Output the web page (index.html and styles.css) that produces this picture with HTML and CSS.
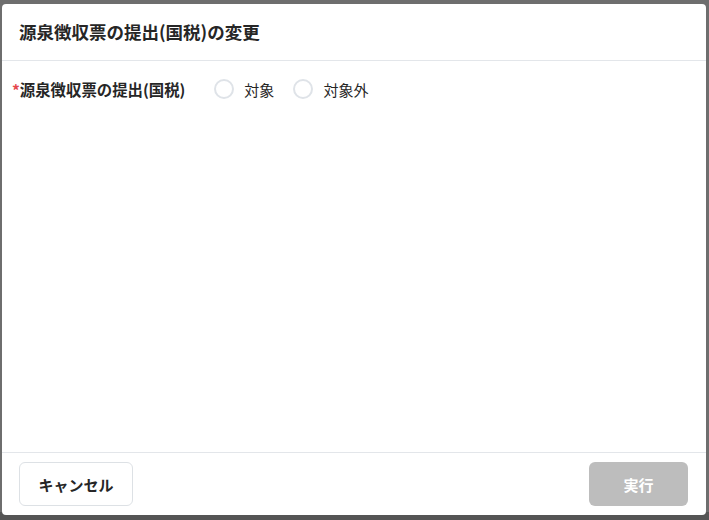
FILE: index.html
```html
<!DOCTYPE html>
<html lang="ja">
<head>
	<meta charset="utf-8">
	<title>源泉徴収票の提出(国税)の変更</title>
	<link rel="stylesheet" href="styles.css">
</head>
<body>
<div class="overlay">
	<div class="modal">
		<header class="modal-header">
			<h2 class="modal-title">源泉徴収票の提出(国税)の変更</h2>
		</header>
		<div class="modal-body">
			<div class="field">
				<span class="field-label"><span class="required">*</span>源泉徴収票の提出(国税)</span>
				<label class="radio"><span class="radio-circle"></span>対象</label>
				<label class="radio"><span class="radio-circle"></span>対象外</label>
			</div>
		</div>
		<footer class="modal-footer">
			<button class="btn btn-cancel">キャンセル</button>
			<button class="btn btn-submit" disabled>実行</button>
		</footer>
	</div>
</div>
</body>
</html>
```

FILE: styles.css
```css
body {
	margin: 0;
	padding: 0;
	background: #6e6e6e;
	font-family: "Noto Sans CJK JP", "Noto Sans", sans-serif;
	color: #262626;
}

.overlay {
	height: 520px;
	box-sizing: border-box;
	padding: 4px 3px 5px 2px;
	background: linear-gradient(to bottom, #6e6e6e 0, #6e6e6e 512px, #555 512px);
}

.modal {
	height: 100%;
	background: #fff;
	border-radius: 4px;
	display: flex;
	flex-direction: column;
}

.modal-header {
	height: 57px;
	box-sizing: border-box;
	padding: 0 17px 2px;
	display: flex;
	align-items: center;
	border-bottom: 1px solid #e3e6ea;
}

.modal-title {
	margin: 0;
	font-size: 17.5px;
	font-weight: 700;
}

.modal-body {
	flex: 1;
	padding: 14px 10px;
}

.field {
	display: flex;
	align-items: center;
	height: 28px;
	font-size: 15px;
}

.field-label {
	font-weight: 700;
	font-size: 15.4px;
	margin-right: 29px;
}

.required {
	color: #e5484d;
}

.radio {
	display: flex;
	align-items: center;
	gap: 10px;
	margin-right: 19px;
}

.radio-circle {
	width: 20px;
	height: 20px;
	box-sizing: border-box;
	border: 2px solid #dfe3e8;
	border-radius: 50%;
}

.modal-footer {
	display: flex;
	justify-content: space-between;
	padding: 9px 18px 9px 17px;
	border-top: 1px solid #e3e6ea;
}

.btn {
	height: 44px;
	border-radius: 6px;
	font-family: inherit;
	font-size: 15px;
	font-weight: 700;
}

.btn-cancel {
	width: 114px;
	background: #fff;
	border: 1px solid #dde1e5;
	color: #262626;
}

.btn-submit {
	width: 99px;
	background: #bdbdbd;
	border: none;
	color: #fff;
}
```
